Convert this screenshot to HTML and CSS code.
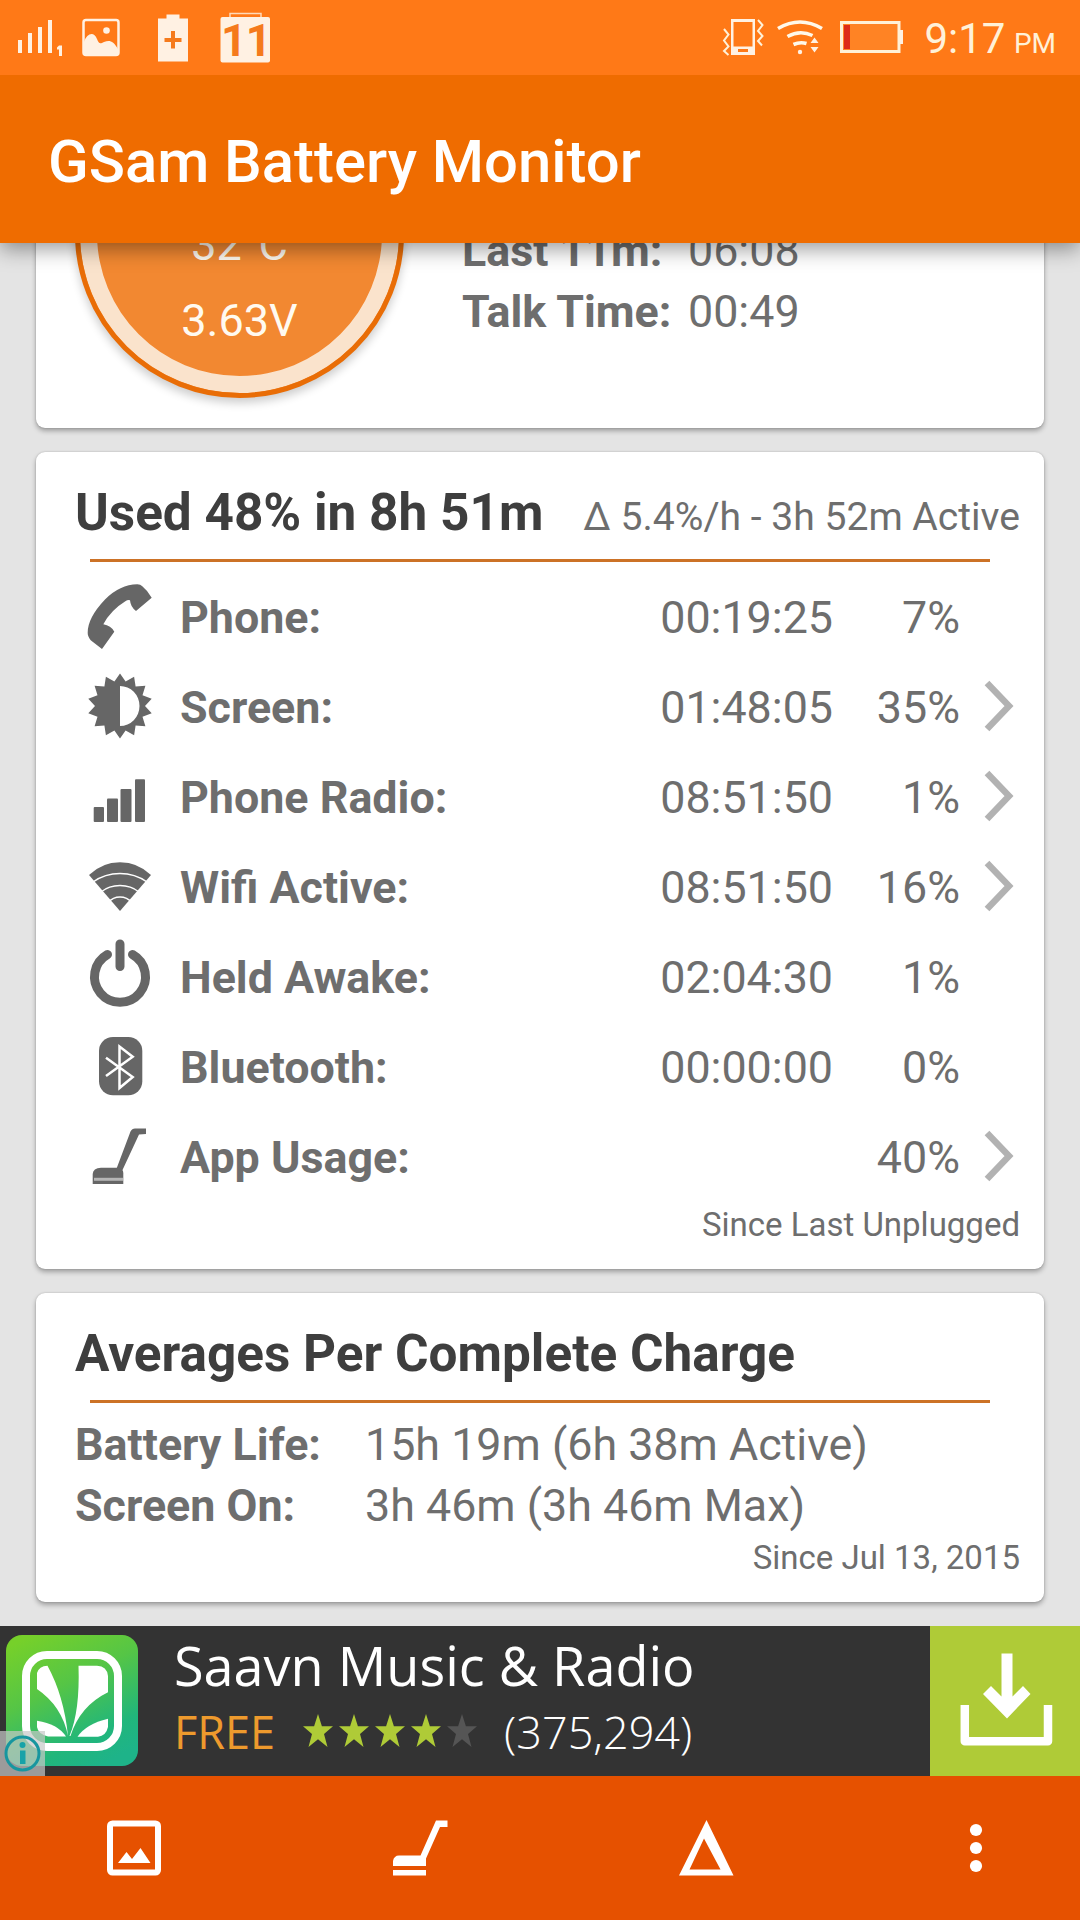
FILE: index.html
```
<!DOCTYPE html>
<html lang="en">
<head>
  <meta charset="UTF-8" />
  <meta name="viewport" content="width=device-width, initial-scale=1.0"/>
  <title>GSam Battery Monitor</title>
  <link rel="stylesheet" href="styles.css">
</head>
<body>
  <div class="status-bar">
    <svg class="st-signal" width="46" height="75" viewBox="18 0 46 75">
      <path d="M18 40h4v13h-4zM28 33h4v20h-4zM38 27h4v26h-4zM48 20h4v33h-4z"/>
      <path d="M59 45.500h3v10.500h-3v-6.500h-2v-2z"/>
    </svg>
    <svg class="st-image" width="38" height="75" viewBox="82 0 38 75">
      <rect x="83.500" y="20" width="35" height="35" rx="2.500" fill="none" stroke="#fff1e3" stroke-width="2.500"/>
      <circle cx="106.500" cy="30.500" r="3.300"/>
      <path d="M84 42c3-9 10-11 13-3 2 5 3 5 7 3 6-2 9-1 14 7v6H84z"/>
    </svg>
    <svg class="st-plus" width="30" height="75" viewBox="158 0 30 75">
      <path d="M158 18.500h8.500v-4h13v4h8.500v43h-30z"/>
      <path d="M164.500 40h17M173 31v17.500" stroke="#f57a1c" stroke-width="4"/>
    </svg>
    <svg class="st-cal" width="50" height="75" viewBox="220 0 50 75">
      <path d="M230 18v-4.500h31V18" fill="none" stroke="#ffd9b8" stroke-width="1.500"/>
      <rect x="220.500" y="17" width="49.500" height="45.500" rx="2"/>
      <text x="221" y="55.500" class="cal-day">11</text>
    </svg>
    <span class="spacer"></span>
    <svg class="st-vibrate" width="42" height="75" viewBox="721 0 42 75">
      <path fill-rule="evenodd" d="M730 19h24v36h-24zM732.500 22v24.500h19V22zM737 49v3h10v-3z"/>
      <path d="M723 29l4.500 5.500-4.500 6 4.500 6-4.500 4.500 4.500 4M757 20l4.500 5-4.500 6 4.500 5-4.500 5 4 4.500" fill="none" stroke="#fff1d8" stroke-width="2"/>
    </svg>
    <svg class="st-wifi" width="46" height="75" viewBox="776 0 46 75">
      <path d="M777 28.500q22-13 44 0M786.500 36.500q12.500-7 25-1M792.500 44.500q6.500-3 13-1" fill="none" stroke="#fff8ea" stroke-width="3.600"/>
      <circle cx="799" cy="52" r="2.200"/>
      <path d="M809.500 43l4-5.500 4 5.500zM809.500 47h8l-4 5.500z"/>
    </svg>
    <svg class="st-battery" width="65" height="75" viewBox="838 0 65 75">
      <rect x="840.500" y="22.500" width="57.500" height="29" fill="#ff8324" stroke="#fff1d8" stroke-width="3"/>
      <path d="M899 30h3v14h-3z"/>
      <path d="M843 25h6v24h-6z" fill="#dd2a18"/>
    </svg>
    <div class="clock">9:17 <small>PM</small></div>
  </div>

  <header class="app-bar">
    <h1>GSam Battery Monitor</h1>
  </header>

  <main class="content">
    <section class="card summary">
      <div class="gauge">
        <div>32°C</div>
        <div>3.63V</div>
      </div>
      <dl class="rates">
        <dt>Last 11m:</dt><dd>06:08</dd>
        <dt>Talk Time:</dt><dd>00:49</dd>
      </dl>
    </section>

    <section class="card">
      <div class="card-head">
        <h2>Used 48% in 8h 51m</h2>
        <span class="rate">Δ 5.4%/h - 3h 52m Active</span>
      </div>
      <div class="usage">
        <div class="row">
          <svg class="icon" viewBox="0 0 72 90"><path d="M53.300 11.300Q56.500 11.500 58.300 13.300Q64 18 67.700 24.700L52 38Q46.500 34 46 27.300Q44 26.500 41 28.500Q27 37 19.300 51.300Q27 52.500 30.300 58.700L18 76L6.700 67.300Q3.500 63 3.700 59.700Q3.500 45 21 26.500Q36 11.500 53.300 11.300z"/></svg>
          <span class="label">Phone:</span><span class="num">00:19:25</span><span class="num">7%</span>
        </div>
        <div class="row">
          <svg class="icon" viewBox="0 0 72 90"><path fill-rule="evenodd" d="M36 10.500L41.600 18.600 50.100 13.700 51.600 23.500 61.400 22.700 58.500 32.200 67.700 35.800 61 43 67.700 50.200 58.500 53.800 61.400 63.300 51.600 62.500 50.100 72.300 41.600 67.400 36 75.500 30.400 67.400 21.900 72.300 20.400 62.500 10.600 63.300 13.500 53.800 4.300 50.200 11 43 4.300 35.800 13.500 32.200 10.600 22.700 20.400 23.500 21.900 13.700 30.400 18.600zM36 23v40a19.500 20 0 0 0 0-40z"/></svg>
          <span class="label">Screen:</span><span class="num">01:48:05</span><span class="num">35%</span>
          <svg class="chevron" viewBox="0 0 60 90"><path d="M27 20L49 43 27 66"/></svg>
        </div>
        <div class="row">
          <svg class="icon" viewBox="0 0 72 90"><rect x="9.700" y="54" width="10.300" height="15" rx="1"/><rect x="23" y="45.500" width="11" height="23.500" rx="1"/><rect x="36.500" y="36" width="11" height="33" rx="1"/><rect x="51" y="26.300" width="10" height="42.700" rx="1"/></svg>
          <span class="label">Phone Radio:</span><span class="num">08:51:50</span><span class="num">1%</span>
          <svg class="chevron" viewBox="0 0 60 90"><path d="M27 20L49 43 27 66"/></svg>
        </div>
        <div class="row">
          <svg class="icon" viewBox="0 0 72 90"><path d="M36 68L5 32Q18 19.200 36 19.200T67 32z"/><path d="M9 39Q21 30.500 36 30.500T63 39M17 49Q25 42.500 36 42.500T55 49M24 59.500Q29 54 36 54T48 59.500" class="gap"/></svg>
          <span class="label">Wifi Active:</span><span class="num">08:51:50</span><span class="num">16%</span>
          <svg class="chevron" viewBox="0 0 60 90"><path d="M27 20L49 43 27 66"/></svg>
        </div>
        <div class="row">
          <svg class="icon" viewBox="0 0 72 90"><path d="M23.500 21.500A25.500 25.500 0 1 0 48.500 21.500M36 11V33.500" class="power"/></svg>
          <span class="label">Held Awake:</span><span class="num">02:04:30</span><span class="num">1%</span>
        </div>
        <div class="row">
          <svg class="icon" viewBox="0 0 72 90"><rect x="15" y="14" width="43.300" height="58.300" rx="14"/><path d="M22 34.700L48.700 54 35.500 65V23.500L48.700 33.700 22 53" class="rune"/></svg>
          <span class="label">Bluetooth:</span><span class="num">00:00:00</span><span class="num">0%</span>
        </div>
        <div class="row">
          <svg class="icon" viewBox="0 0 72 90"><path d="M62 15.500V21L55 21.500 38.500 57H32L46.500 18.500Q48 15.500 51 15.500z"/><path d="M8.700 71V61Q9 55 17 54.700H33Q39.300 55 39.300 60V71z"/><path d="M10 66.300h29" class="trim"/></svg>
          <span class="label">App Usage:</span><span class="num"></span><span class="num">40%</span>
          <svg class="chevron" viewBox="0 0 60 90"><path d="M27 20L49 43 27 66"/></svg>
        </div>
      </div>
      <p class="since">Since Last Unplugged</p>
    </section>

    <section class="card">
      <div class="card-head">
        <h2>Averages Per Complete Charge</h2>
      </div>
      <dl class="averages">
        <dt>Battery Life:</dt><dd>15h 19m (6h 38m Active)</dd>
        <dt>Screen On:</dt><dd>3h 46m (3h 46m Max)</dd>
      </dl>
      <p class="since">Since Jul 13, 2015</p>
    </section>
  </main>

  <aside class="ad">
    <svg class="ad-logo" width="138" height="150" viewBox="0 0 138 150">
      <defs>
        <linearGradient id="leaf" x1="0.200" y1="0" x2="0.700" y2="1">
          <stop offset="0" stop-color="#76d02a"/>
          <stop offset="0.400" stop-color="#55c546"/>
          <stop offset="0.800" stop-color="#21b67b"/>
          <stop offset="1" stop-color="#1eb389"/>
        </linearGradient>
      </defs>
      <rect x="6" y="9" width="132" height="131" rx="16" fill="url(#leaf)"/>
      <rect x="26" y="29" width="92" height="92" rx="21" fill="none" stroke="#fff" stroke-width="8"/>
      <g fill="#fff">
        <path d="M37 63V47Q39 40 47.500 39.700Q64 70 68 110Q62 80 37 63z"/>
        <path d="M78.500 39.700H97Q107 40 108 50V66.300Q80 80 70.500 110H69.500Q80 85 78.500 39.700z"/>
        <path d="M37 94.700Q58 98 66 110.500H48Q38 108 37 101z"/>
        <path d="M108 92.700V101Q106 110 98 110.700H77.500Q86 98 108 92.700z"/>
      </g>
    </svg>
    <svg class="ad-info" width="45" height="45" viewBox="0 0 45 45">
      <rect width="45" height="45" fill="#c8c8c8" fill-opacity="0.700"/>
      <circle cx="22.500" cy="22.500" r="16.500" fill="none" stroke="#17969f" stroke-width="3"/>
      <circle cx="22.500" cy="14" r="3" fill="#17a2a8"/>
      <path d="M20 19.500h5.500v13.500h-5.500z" fill="#17a2a8"/>
    </svg>
    <div class="ad-text">
      <div class="ad-title">Saavn Music &amp; Radio</div>
      <div class="ad-meta">
        <span class="price">FREE</span>
        <svg class="stars" width="176" height="34" viewBox="0 0 176 34">
          <defs>
            <path id="star" d="M16 0l3.900 12.300H31L22 20l3.500 13L16 25.200 6.500 33 10 20 1 12.300h11.100z"/>
          </defs>
          <g fill="#afcb37">
            <use href="#star"/>
            <use href="#star" x="36"/>
            <use href="#star" x="72"/>
            <use href="#star" x="108"/>
          </g>
          <use href="#star" x="144" fill="#555"/>
        </svg>
        <span class="votes">(375,294)</span>
      </div>
    </div>
    <svg class="ad-download" width="150" height="150" viewBox="0 0 150 150">
      <path d="M71.500 27.500h11v43l10.500-10.500 7.500 8-23.500 24.500L53 68l8-8 10.500 10.500z" fill="#fff"/>
      <path d="M34.800 79V115.200H118V79" fill="none" stroke="#fff" stroke-width="8.500" stroke-linejoin="round"/>
    </svg>
  </aside>

  <nav class="bottom-bar">
    <svg width="55" height="56" viewBox="0 0 55 56">
      <rect x="3" y="3.500" width="48" height="49" rx="2.500" fill="none" stroke="#fff" stroke-width="6"/>
      <path d="M11 43l8.500-11 5.500 7 8.500-11 10 15z"/>
    </svg>
    <svg width="55" height="56" viewBox="0 0 55 56">
      <path d="M43 0.500H54.500V7H47L33 38.500V46H0V41Q1 35.500 6 35.500H27.500zM0 50h33v5.500H0z"/>
    </svg>
    <svg width="55" height="56" viewBox="0 0 55 56">
      <path fill-rule="evenodd" d="M27.500 0L54.500 55.500H0zM25 18.500L10.500 49.500H41.500z"/>
    </svg>
    <svg width="22" height="56" viewBox="0 0 22 56">
      <circle cx="11" cy="10" r="6.100"/><circle cx="11" cy="28" r="6.100"/><circle cx="11" cy="46" r="6.100"/>
    </svg>
  </nav>
</body>
</html>
```
FILE: styles.css
```
* {
  box-sizing: border-box;
  margin: 0;
  padding: 0;
}
body {
  width: 1080px;
  height: 1920px;
  display: flex;
  flex-direction: column;
  font-family: Roboto, sans-serif;
  background: #e4e4e4;
  color: #6e6e6e;
  overflow: hidden;
}
svg {
  display: block;
  flex: none;
}

/* Status bar */
.status-bar {
  height: 75px;
  flex: none;
  display: flex;
  align-items: center;
  padding: 0 24px 0 18px;
  background: #ff7917;
  color: #fff1d8;
  position: relative;
  z-index: 2;
}
.status-bar svg {
  fill: #fff1e3;
}
.st-signal {
  margin-right: 18px;
}
.st-image {
  margin-right: 38px;
}
.st-plus {
  margin-right: 32px;
}
.status-bar .cal-day {
  font-size: 45px;
  font-weight: bold;
  letter-spacing: -1px;
  fill: #f57a1c;
}
.spacer {
  flex: 1;
}
.st-vibrate {
  margin-right: 13px;
}
.st-wifi {
  margin-right: 16px;
}
.st-battery {
  margin-right: 20px;
}
.clock {
  font-size: 42px;
  line-height: 75px;
  padding-top: 6px;
  white-space: nowrap;
}
.clock small {
  font-size: 28px;
  margin-left: -2px;
}

/* App bar */
.app-bar {
  height: 168px;
  flex: none;
  padding: 3px 48px 0;
  background: #ef6c00;
  box-shadow: 0 6px 20px rgba(0, 0, 0, 0.4);
  position: relative;
  z-index: 1;
}
.app-bar h1 {
  font-size: 59.8px;
  font-weight: 500;
  line-height: 168px;
  color: #fff;
}

/* Cards, scrolled to the end of the list */
.content {
  flex: 1;
  min-height: 0;
  display: flex;
  flex-direction: column;
  justify-content: flex-end;
  gap: 24px;
  padding: 0 36px 24px;
  overflow: hidden;
}
.card {
  flex: none;
  background: #fff;
  border-radius: 9px;
  padding: 0 24px 25px 39px;
  box-shadow: 0 3px 5px rgba(0, 0, 0, 0.3), 0 0 2px rgba(0, 0, 0, 0.2);
}
.summary {
  height: 390px;
  display: flex;
  align-items: flex-end;
  padding-bottom: 30px;
}
.gauge {
  width: 329px;
  height: 329px;
  border-radius: 50%;
  border: 5px solid #e96d06;
  background: #f28831;
  box-shadow: inset 0 0 0 17px #fae3cc, 0 5px 10px rgba(0, 0, 0, 0.2);
  display: flex;
  flex-direction: column;
  justify-content: flex-end;
  padding-bottom: 34px;
  text-align: center;
  font-size: 45px;
  line-height: 76px;
  color: #fffaf0;
}
.rates {
  display: grid;
  grid-template-columns: 226px auto;
  margin: 0 0 56px 58px;
  font-size: 44.8px;
  line-height: 61px;
}
dt {
  font-weight: bold;
}
.card-head {
  height: 110px;
  padding-top: 31px;
  display: flex;
  align-items: baseline;
  justify-content: space-between;
  line-height: 60px;
  position: relative;
}
.card-head::after {
  content: "";
  position: absolute;
  left: 15px;
  right: 30px;
  bottom: 0;
  height: 3px;
  background: #cc7226;
}
.card-head h2 {
  font-size: 51.3px;
  font-weight: bold;
  color: #3e3e3e;
}
.rate {
  font-size: 39.1px;
}
.usage {
  padding-top: 11px;
}
.row {
  display: grid;
  grid-template-columns: 105px 1fr 200px 127px 60px;
  height: 90px;
  line-height: 90px;
  font-size: 44.8px;
}
.icon {
  width: 72px;
  height: 90px;
  margin-left: 9px;
  fill: #666;
}
.icon .gap {
  fill: none;
  stroke: #fff;
  stroke-width: 1.5;
}
.icon .power {
  fill: none;
  stroke: #666;
  stroke-width: 9;
  stroke-linecap: round;
}
.icon .rune {
  fill: none;
  stroke: #fff;
  stroke-width: 2.5;
}
.icon .trim {
  stroke: #b5b5b5;
  stroke-width: 3;
}
.label {
  font-weight: bold;
}
.num {
  text-align: right;
}
.chevron {
  width: 60px;
  height: 90px;
  fill: none;
  stroke: #b2b2b2;
  stroke-width: 6.5;
}
.since {
  text-align: right;
  font-size: 33px;
  line-height: 38px;
  padding-top: 3px;
}
.averages {
  display: grid;
  grid-template-columns: 290px auto;
  padding-top: 11px;
  font-size: 44.8px;
  line-height: 61px;
}

/* Ad banner */
.ad {
  height: 150px;
  flex: none;
  display: flex;
  background: #333;
  color: #fff;
  font-family: "Open Sans", sans-serif;
  position: relative;
}
.ad-info {
  position: absolute;
  left: 0;
  bottom: 0;
}
.ad-text {
  flex: 1;
  padding-left: 36px;
}
.ad-title {
  font-size: 54px;
  line-height: 78px;
}
.ad-meta {
  display: flex;
  align-items: center;
  font-size: 45px;
  line-height: 56px;
}
.price {
  color: #ee9a2d;
}
.stars {
  margin: -3px 26px 0 27px;
}
.votes {
  font-weight: 300;
}
.ad-download {
  background: #afcb37;
}

/* Bottom navigation */
.bottom-bar {
  height: 144px;
  flex: none;
  display: flex;
  align-items: center;
  gap: 231px;
  padding-left: 107px;
  background: #e65100;
}
.bottom-bar svg {
  fill: #fff;
}
```
